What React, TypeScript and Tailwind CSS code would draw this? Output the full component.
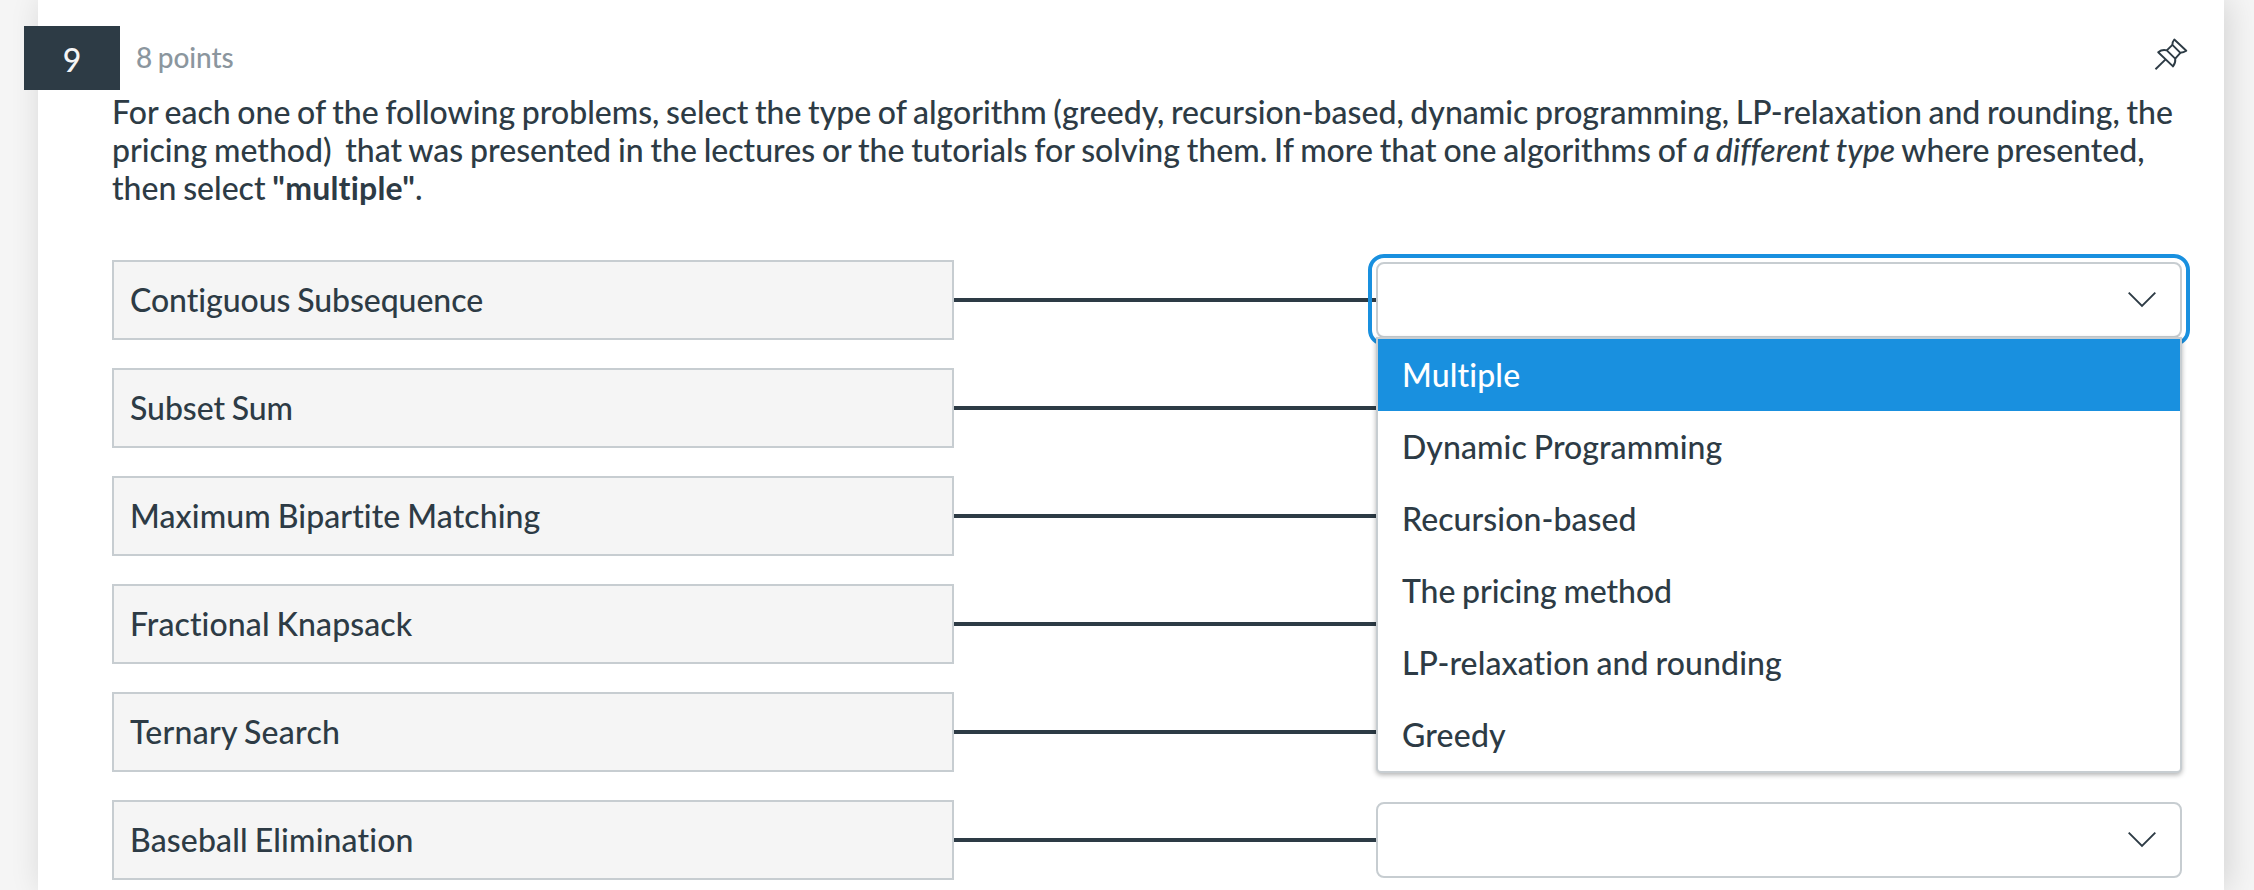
const problems = [
  { text: 'Contiguous Subsequence', tracking: 'tracking-[-0.05px]' },
  { text: 'Subset Sum', tracking: 'tracking-[-0.05px]' },
  { text: 'Maximum Bipartite Matching', tracking: 'tracking-[0.1px]' },
  { text: 'Fractional Knapsack', tracking: 'tracking-[0.1px]' },
  { text: 'Ternary Search', tracking: 'tracking-[0.25px]' },
  { text: 'Baseball Elimination', tracking: 'tracking-[0.15px]' },
];

const options = [
  { text: 'Multiple', tracking: 'tracking-[0.15px]' },
  { text: 'Dynamic Programming', tracking: 'tracking-[0.08px]' },
  { text: 'Recursion-based', tracking: 'tracking-[0.08px]' },
  { text: 'The pricing method', tracking: 'tracking-[-0.08px]' },
  { text: 'LP-relaxation and rounding', tracking: 'tracking-[0.1px]' },
  { text: 'Greedy', tracking: 'tracking-[0.2px]' },
];

function PinIcon() {
  return (
    <svg
      width="34"
      height="34"
      viewBox="0 0 34 34"
      fill="none"
      stroke="currentColor"
      strokeWidth="1.9"
      strokeLinejoin="round"
      strokeLinecap="butt"
    >
      <path d="M20.3 2.5L32.3 13.8C30.6 15 28.6 15.7 26.4 15.8L18.4 7.8C18.2 6 19 4 20.3 2.5Z" />
      <path d="M18.4 7.8L12.8 13.4M26.4 15.8L21.2 21.6" />
      <path d="M12.8 13.4L21.2 21.6C21.6 24.3 20.8 27 19 29.4L4.2 15.2C6.6 13.3 9.8 12.6 12.8 13.4Z" />
      <path d="M11.6 22.4L1.5 32.3" />
    </svg>
  );
}

function ChevronIcon() {
  return (
    <svg width="28" height="16" viewBox="0 0 28 16" fill="none" stroke="currentColor" strokeWidth="1.9">
      <path d="M0.7 0.7L14 14L27.3 0.7" />
    </svg>
  );
}

function OptionMenu() {
  return (
    <ul className="absolute -left-0.5 top-[73px] z-10 w-[806px] rounded-b-[5px] border-2 border-[#c7cdd1] bg-white shadow-[0_2px_5px_rgba(0,0,0,0.3)]">
      {options.map(({ text, tracking }, i) => (
        <li
          key={text}
          className={
            i === 0
              ? 'flex h-[72px] items-center bg-[#1990df] px-6 text-white'
              : 'flex h-[72px] items-center px-6'
          }
        >
          <span className={tracking}>{text}</span>
        </li>
      ))}
    </ul>
  );
}

function Select({ open }: { open: boolean }) {
  return (
    <div
      className={
        open
          ? 'relative flex h-[76px] w-[806px] items-center justify-end rounded-lg border-2 border-[#c7cdd1] bg-white pr-6 outline-4 outline-offset-4 outline-[#1990df]'
          : 'relative flex h-[76px] w-[806px] items-center justify-end rounded-lg border-2 border-[#c7cdd1] bg-white pr-6'
      }
    >
      <ChevronIcon />
      {open && <OptionMenu />}
    </div>
  );
}

export default function App() {
  return (
    <div className="h-[890px] w-[2254px] overflow-hidden bg-[#f5f5f5] pl-[38px] font-['Lato',sans-serif] text-[32px] leading-[38px] font-medium text-[#2d3b45] [font-variant-ligatures:none] [word-spacing:-1.25px]">
      <main className="h-full w-[2186px] bg-white pt-[26px] shadow-[4px_0_30px_rgba(0,0,0,0.14)]">
        <header className="-ml-3.5 flex h-16 items-center pr-9">
          <div className="flex h-16 w-24 items-center justify-center bg-[#2d3b45] pt-1 text-[#f5f5f5]">
            9
          </div>
          <span className="mb-0.5 ml-4 text-[28px] tracking-[-0.1px] text-[#8b969e]">8 points</span>
          <button className="mb-2 ml-auto" aria-label="Pin question">
            <PinIcon />
          </button>
        </header>
        <section className="ml-[74px] w-[2070px]">
          <p className="mt-[3px] whitespace-nowrap">
            <span className="[word-spacing:-1.45px]">
              For each one of the following problems, select the type of algorithm (greedy, recursion-based, dynamic
              programming, LP-relaxation and rounding, the
            </span>
            <br />
            pricing method)&nbsp; that was presented in the lectures or the tutorials for solving them. If more that one
            algorithms of <em>a different type</em> where presented,
            <br />
            then select <strong className="tracking-[0.2px]">"multiple"</strong>.
          </p>
          <div className="mt-[53px] flex flex-col gap-7">
            {problems.map(({ text, tracking }, i) => (
              <div key={text} className="flex h-20 items-center">
                <div className="flex h-20 w-[842px] items-center border-2 border-[#c7cdd1] bg-[#f5f5f5] px-4">
                  <span className={tracking}>{text}</span>
                </div>
                <div className="h-1 flex-1 bg-[#2d3b45]" />
                <Select open={i === 0} />
              </div>
            ))}
          </div>
        </section>
      </main>
    </div>
  );
}
